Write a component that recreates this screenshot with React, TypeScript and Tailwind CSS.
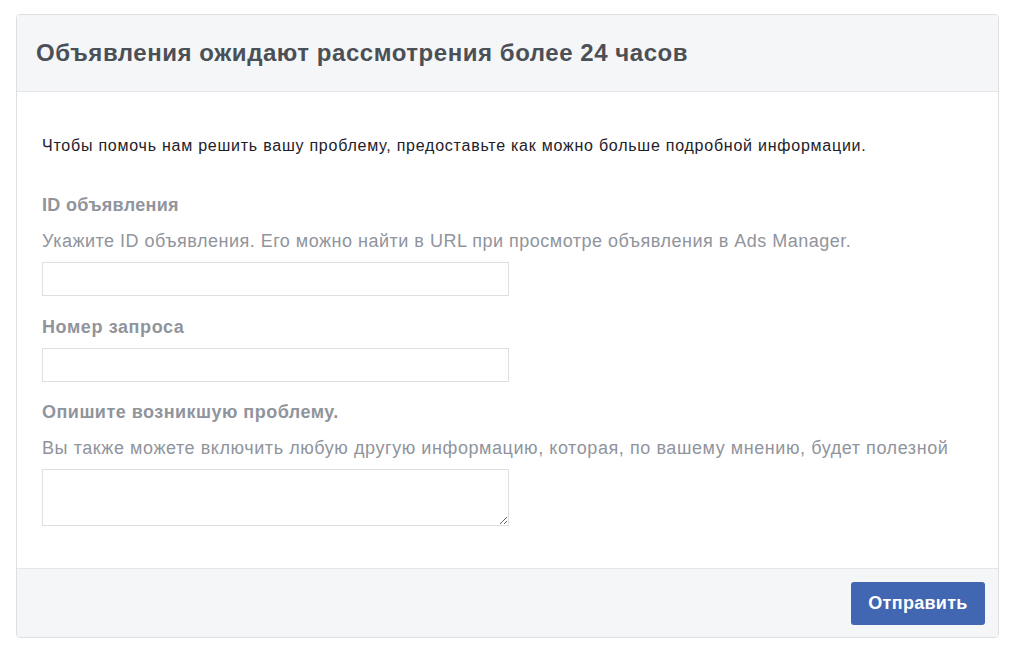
import React from "react";

export default function App() {
  return (
    <div className="w-[1024px] h-[665px] bg-white pt-[14px] pl-[16px]" style={{ fontFamily: '"Liberation Sans", Arial, sans-serif' }}>
      <div className="w-[983px] h-[624px] border border-[#dddfe2] rounded-[4px] flex flex-col overflow-hidden">
        <div className="h-[77px] bg-[#f5f6f7] border-b border-[#e5e6e9] flex items-center pl-[19px] shrink-0">
          <h1 className="text-[24px] font-bold text-[#4b4f56] leading-none tracking-[0.55px]">Объявления ожидают рассмотрения более 24 часов</h1>
        </div>
        <div className="flex-1 pl-[25px] pt-[44px]">
          <p className="text-[16px] text-[#1d2129] leading-[20px] tracking-[0.76px]">Чтобы помочь нам решить вашу проблему, предоставьте как можно больше подробной информации.</p>
          <div className="mt-[38px] text-[18px] font-bold text-[#90949c] leading-[22px] tracking-[0.3px]">ID объявления</div>
          <div className="mt-[14px] text-[18px] text-[#90949c] leading-[22px] tracking-[0.5px]">Укажите ID объявления. Его можно найти в URL при просмотре объявления в Ads Manager.</div>
          <input className="mt-[10px] block w-[467px] h-[34px] border border-[#dddfe2] bg-white outline-none" />
          <div className="mt-[20px] text-[18px] font-bold text-[#90949c] leading-[22px] tracking-[0.6px]">Номер запроса</div>
          <input className="mt-[10px] block w-[467px] h-[34px] border border-[#dddfe2] bg-white outline-none" />
          <div className="mt-[19px] text-[18px] font-bold text-[#90949c] leading-[22px] tracking-[0.48px]">Опишите возникшую проблему.</div>
          <div className="mt-[14px] text-[18px] text-[#90949c] leading-[22px] tracking-[0.57px]">Вы также можете включить любую другую информацию, которая, по вашему мнению, будет полезной</div>
          <textarea className="mt-[10px] block w-[467px] h-[57px] border border-[#dddfe2] bg-white outline-none" />
        </div>
        <div className="h-[69px] bg-[#f5f6f7] border-t border-[#e5e6e9] flex items-center justify-end pr-[13px] shrink-0">
          <button className="w-[134px] h-[43px] rounded-[3px] bg-[#4267b2] text-white text-[18px] font-bold tracking-[0.3px]">Отправить</button>
        </div>
      </div>
    </div>
  );
}
